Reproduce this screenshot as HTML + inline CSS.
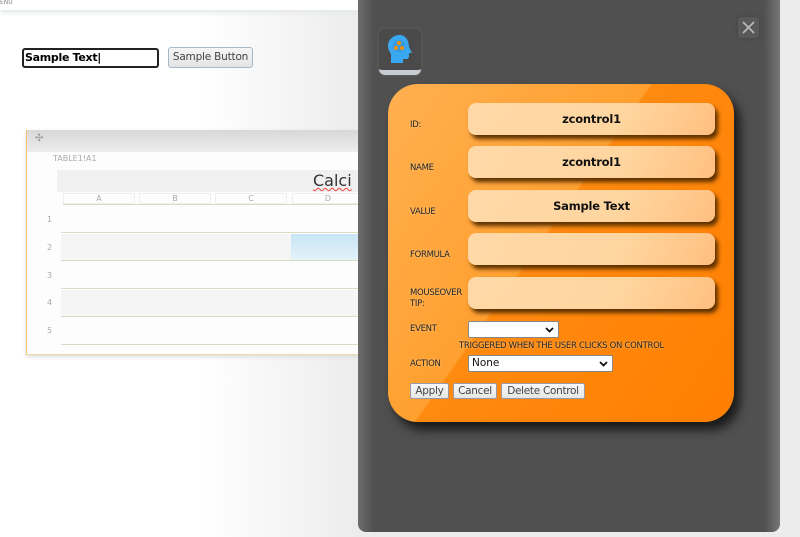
<!DOCTYPE html>
<html><head><meta charset="utf-8">
<style>
*{box-sizing:border-box;margin:0;padding:0}
body{width:800px;height:537px;overflow:hidden;position:relative;background:#fff;font-family:"DejaVu Sans","Liberation Sans",sans-serif}
.abs{position:absolute}
.bgfade{left:0;top:0;width:800px;height:537px;background:linear-gradient(90deg,#fff 0,#fff 200px,#ececec 360px)}
.hdr{left:0;top:0;width:360px;height:10px;background:#fff;box-shadow:0 3px 5px #e6eaea;font-size:6px;color:#888;line-height:6px}
.inp{left:22px;top:48px;width:137px;height:20px;border:2px solid #222;border-radius:3px;background:#fff;font-size:11px;font-weight:bold;padding:1px 1px;line-height:14px;letter-spacing:-0.3px}
.btn{left:168px;top:47px;width:85px;height:21px;border:1px solid #a8b8c8;border-radius:3px;background:linear-gradient(#f6f6f6,#e4e4e4);font-size:10.5px;color:#444;text-align:center;line-height:19px;letter-spacing:-0.2px}
.sheet{left:26px;top:130px;width:340px;height:225px;border-left:1px solid #f5c070;border-bottom:1px solid #f0d8a8;background:#fdfdfd;box-shadow:0 2px 4px #ddd}
.sbar{left:0;top:0;width:340px;height:22px;background:linear-gradient(#d8d8d8,#ececec)}
.row{position:absolute;left:34px;width:310px;height:27px;border-bottom:1px solid #d8dcc0}
.rn{position:absolute;left:20px;font-size:8px;color:#aaa}
.panel{left:358px;top:0;width:422px;height:532px;border-radius:0 0 8px 8px;background:linear-gradient(90deg,#6c6c6c 0,#505050 16px,#505050 406px,#777 422px)}
.card{left:388px;top:84px;width:346px;height:338px;border-radius:30px;background:linear-gradient(125deg,#ffb050 0%,#ffa030 45%,#ff8a10 45.5%,#ff7f00 100%);box-shadow:6px 8px 10px #1a1a1a}
.lab{position:absolute;left:22px;font-size:8.5px;color:#222;text-shadow:0 0 2px #ffd090;letter-spacing:-0.3px}
.fld{position:absolute;left:80px;width:247px;height:32px;border-radius:8px;background:linear-gradient(120deg,#ffd8a8,#ffd6a0 60%,#ffbf80);box-shadow:3px 4px 4px #5a3000;text-align:center;font-size:11.5px;font-weight:bold;line-height:32px;color:#111;letter-spacing:-0.2px}
.sel{position:absolute;left:80px;height:17px;border:1px solid #888;border-radius:2px;background:#fff;font-size:10.5px;line-height:15px;padding-left:3px;color:#111}
.sel svg{position:absolute;right:4px;top:5px}
.b{position:absolute;top:299px;height:16px;border:1px solid #99a;border-radius:2px;background:linear-gradient(#f8f8f8,#e6e6e6);font-size:10.5px;line-height:14px;text-align:center;color:#444;letter-spacing:-0.3px}
</style></head><body>
<div class="abs bgfade"></div>
<div class="abs hdr">ENU</div>
<div class="abs inp">Sample Text|</div>
<div class="abs btn">Sample Button</div>
<div class="abs sheet">
 <div class="abs sbar"><span style="position:absolute;left:8px;top:3px;font-size:10px;color:#999">✣</span></div>
 <div class="abs" style="left:26px;top:24px;font-size:8px;color:#aaa">TABLE1!A1</div>
 <div class="abs" style="left:30px;top:40px;width:310px;height:22px;background:#f0f0f0"></div>
 <div class="abs" style="left:286px;top:41px;font-size:16px;color:#333;text-decoration:underline wavy #e44 1px">Calci</div>
 <div class="abs" style="left:36px;top:63px;width:306px;height:12px;border-bottom:1px solid #d8dcc0;font-size:8px;color:#aaa">
  <span style="position:absolute;left:0;width:72px;text-align:center;border:1px solid #eee">A</span>
  <span style="position:absolute;left:76px;width:72px;text-align:center;border:1px solid #eee">B</span>
  <span style="position:absolute;left:152px;width:72px;text-align:center;border:1px solid #eee">C</span>
  <span style="position:absolute;left:229px;width:72px;text-align:center;border:1px solid #eee">D</span>
 </div>
 <div class="row" style="top:76px"></div><span class="rn" style="top:85px">1</span>
 <div class="row" style="top:104px;background:#f5f5f5"><div style="position:absolute;left:230px;top:0;width:80px;height:26px;background:linear-gradient(#c8e4f4,#e4f2fa)"></div></div><span class="rn" style="top:113px">2</span>
 <div class="row" style="top:132px"></div><span class="rn" style="top:141px">3</span>
 <div class="row" style="top:160px;background:#f5f5f5"></div><span class="rn" style="top:168px">4</span>
 <div class="row" style="top:188px"></div><span class="rn" style="top:196px">5</span>
</div>
<div class="abs panel"></div>
<div class="abs" style="left:738px;top:17px;width:21px;height:21px;border-radius:3px;background:#595959;box-shadow:0 0 4px #444">
<svg width="21" height="21"><path d="M5 5L16 16M16 5L5 16" stroke="#bbb" stroke-width="1.6"/></svg></div>
<div class="abs" style="left:379px;top:29px;width:42px;height:46px;border-radius:6px;background:#4a4a4a;border-bottom:5px solid #c8ccd4;box-shadow:0 0 3px #666">
<svg width="42" height="41" viewBox="0 0 42 41"><path d="M21 6c-7 0-12 5-12 11 0 4 2 6 3 8v9h12v-4h3c2 0 3-1 3-3v-3h3l-3-6c0-7-4-12-9-12z" fill="#3aa8f0"/><circle cx="20" cy="17" r="6" fill="#2a7fc0" opacity=".35"/><circle cx="20" cy="14" r="2" fill="#f59000"/><circle cx="17" cy="19" r="2" fill="#f59000"/><circle cx="23" cy="19" r="2" fill="#f59000"/></svg></div>
<div class="abs card">
 <div class="lab" style="top:36px">ID:</div><div class="fld" style="top:19px">zcontrol1</div>
 <div class="lab" style="top:79px">NAME</div><div class="fld" style="top:62px">zcontrol1</div>
 <div class="lab" style="top:123px">VALUE</div><div class="fld" style="top:106px">Sample Text</div>
 <div class="lab" style="top:166px">FORMULA</div><div class="fld" style="top:149px"></div>
 <div class="lab" style="top:204px;line-height:11px">MOUSEOVER<br>TIP:</div><div class="fld" style="top:193px"></div>
 <div class="lab" style="top:240px">EVENT</div><div class="sel" style="top:237px;width:91px"><svg width="9" height="6"><path d="M1 1L4.5 4.5L8 1" stroke="#111" stroke-width="1.8" fill="none"/></svg></div>
 <div class="lab" style="left:71px;top:257px;font-size:8.5px">TRIGGERED WHEN THE USER CLICKS ON CONTROL</div>
 <div class="lab" style="top:275px">ACTION</div><div class="sel" style="top:271px;width:145px">None<svg width="9" height="6"><path d="M1 1L4.5 4.5L8 1" stroke="#111" stroke-width="1.8" fill="none"/></svg></div>
 <div class="b" style="left:22px;width:39px">Apply</div>
 <div class="b" style="left:65px;width:44px">Cancel</div>
 <div class="b" style="left:113px;width:84px">Delete Control</div>
</div>
</body></html>
